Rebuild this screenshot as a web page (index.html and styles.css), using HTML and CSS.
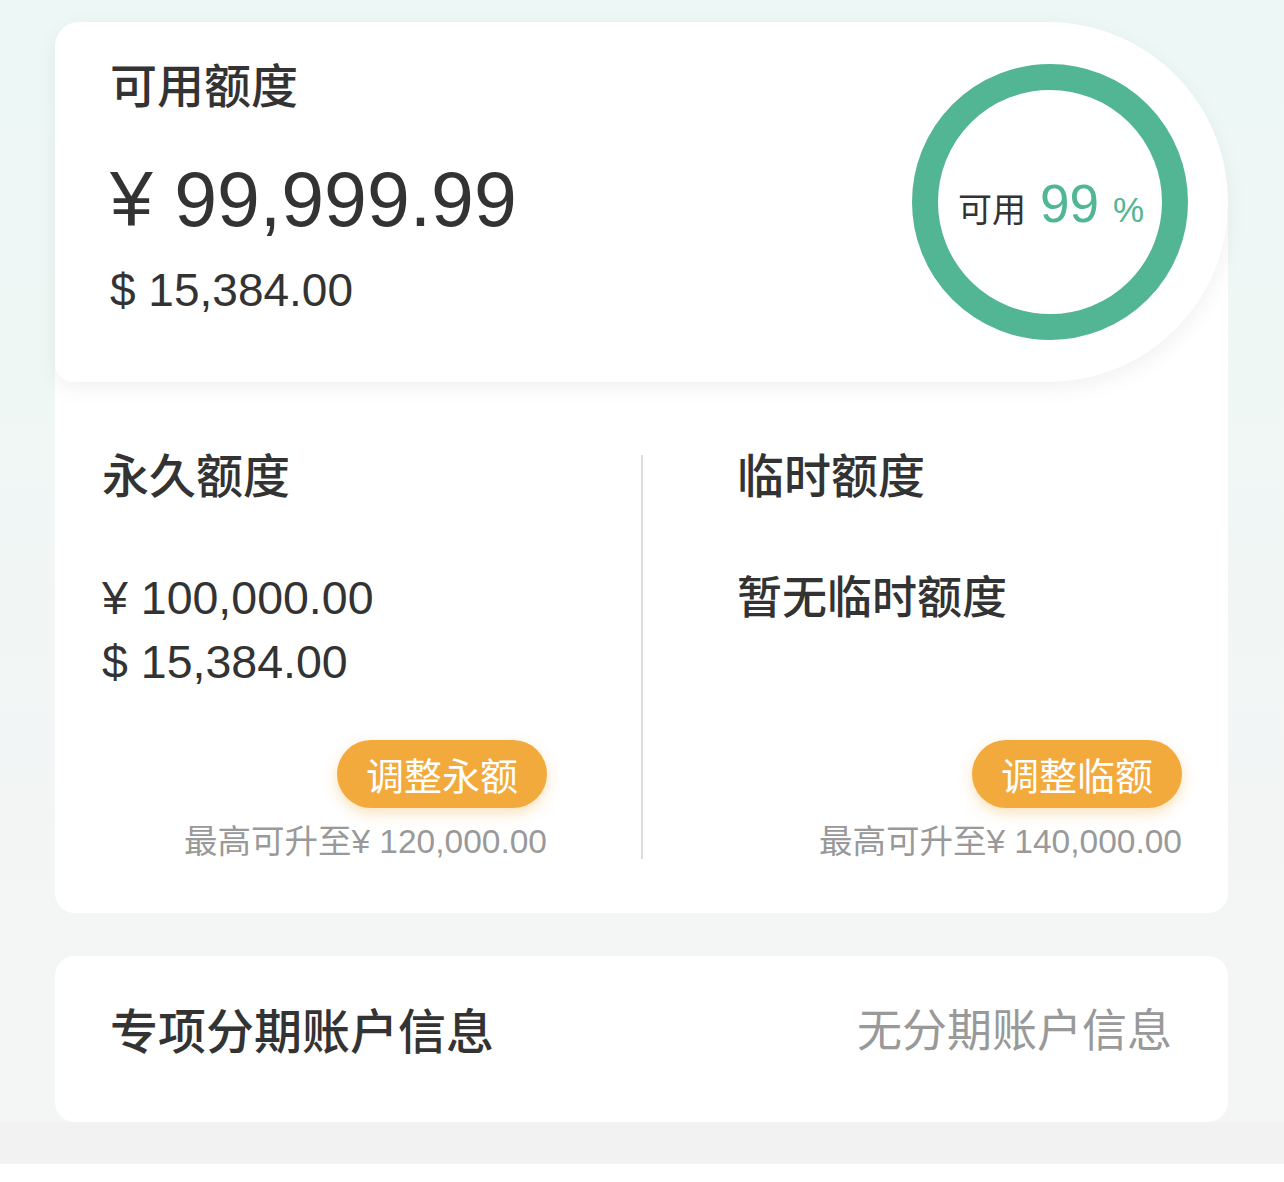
FILE: index.html
```html
<!DOCTYPE html>
<html lang="zh-CN">
<head>
<meta charset="utf-8">
<title>额度</title>
<link rel="stylesheet" href="styles.css">
</head>
<body>
<div class="page">
  <section class="top-card">
    <div class="avail">
      <div class="avail-title">可用额度</div>
      <div class="avail-cny">¥ 99,999.99</div>
      <div class="avail-usd">$ 15,384.00</div>
    </div>
    <div class="ring">
      <svg class="ring-svg" width="276" height="276" viewBox="0 0 276 276">
        <circle cx="138" cy="138" r="125" fill="none" stroke="#52b594" stroke-width="26"/>
      </svg>
      <div class="ring-text"><span class="ring-label">可用</span><span class="ring-num">99</span><span class="ring-pct">%</span></div>
    </div>
  </section>

  <section class="quota-card">
    <div class="quota-grid">
      <div class="quota-col">
        <div class="quota-title">永久额度</div>
        <div class="quota-amounts">
          <div class="amount">¥ 100,000.00</div>
          <div class="amount">$ 15,384.00</div>
        </div>
        <div class="quota-actions">
          <button class="btn">调整永额</button>
          <div class="note">最高可升至¥ 120,000.00</div>
        </div>
      </div>
      <div class="divider"></div>
      <div class="quota-col">
        <div class="quota-title">临时额度</div>
        <div class="quota-empty">暂无临时额度</div>
        <div class="quota-actions">
          <button class="btn">调整临额</button>
          <div class="note">最高可升至¥ 140,000.00</div>
        </div>
      </div>
    </div>
  </section>

  <section class="install-card">
    <div class="install-title">专项分期账户信息</div>
    <div class="install-value">无分期账户信息</div>
  </section>
</div>
<div class="band"></div>
</body>
</html>
```
FILE: styles.css
```css
html, body {
  margin: 0;
  padding: 0;
  background: #ffffff;
}

body {
  font-family: "Liberation Sans", "Noto Sans CJK SC", sans-serif;
  color: #333333;
}

.page {
  padding: 22px 56px 0 55px;
  background: linear-gradient(180deg, #edf8f6 0%, #f0f7f5 40%, #f4f5f5 80%, #f4f5f5 100%);
}

/* top card */
.top-card {
  position: relative;
  z-index: 2;
  height: 360px;
  box-sizing: border-box;
  display: flex;
  justify-content: space-between;
  align-items: center;
  padding: 0 40px 0 55px;
  background: #ffffff;
  border-radius: 24px 180px 180px 18px;
  box-shadow: 0 6px 22px rgba(0, 0, 0, 0.06);
}

.avail {
  align-self: flex-start;
  padding-top: 37px;
}

.avail-title {
  font-family: "Noto Sans CJK SC", sans-serif;
  font-size: 47px;
  line-height: 47px;
  font-weight: 500;
  color: #333333;
}

.avail-cny {
  margin-top: 55px;
  font-size: 77px;
  line-height: 77px;
  color: #333333;
}

.avail-usd {
  margin-top: 29px;
  font-size: 46px;
  line-height: 46px;
  color: #333333;
}

.ring {
  position: relative;
  width: 276px;
  height: 276px;
  display: flex;
  align-items: center;
  justify-content: center;
}

.ring-svg {
  position: absolute;
  left: 0;
  top: 0;
}

.ring-text {
  position: relative;
  white-space: nowrap;
  margin-top: 2px;
  margin-left: 2px;
}

.ring-label {
  font-family: "Noto Sans CJK SC", sans-serif;
  font-size: 34px;
  color: #333333;
}

.ring-num {
  margin-left: 14px;
  font-size: 53px;
  color: #52b594;
}

.ring-pct {
  margin-left: 14px;
  font-size: 35px;
  color: #52b594;
}

/* quota card */
.quota-card {
  position: relative;
  z-index: 1;
  margin-top: -180px;
  padding: 247px 46px 54px 47px;
  background: #ffffff;
  border-radius: 20px;
}

.quota-grid {
  display: grid;
  grid-template-columns: 1fr 2px 1fr;
  column-gap: 94px;
}

.divider {
  background: #dcdcdc;
  margin-top: 6px;
}

.quota-col {
  display: flex;
  flex-direction: column;
}

.quota-title {
  font-family: "Noto Sans CJK SC", sans-serif;
  font-size: 47px;
  line-height: 47px;
  font-weight: 500;
  color: #333333;
}

.quota-amounts {
  margin-top: 79px;
  display: flex;
  flex-direction: column;
  gap: 18px;
}

.amount {
  font-size: 46.5px;
  line-height: 46px;
  color: #333333;
}

.quota-empty {
  margin-top: 76px;
  font-family: "Noto Sans CJK SC", sans-serif;
  font-size: 45px;
  line-height: 45px;
  font-weight: 500;
  color: #333333;
}

.quota-actions {
  margin-top: auto;
  padding-top: 55px;
  display: flex;
  flex-direction: column;
  align-items: flex-end;
}

.btn {
  width: 210px;
  height: 68px;
  border: none;
  border-radius: 34px;
  background: #f2aa3c;
  color: #ffffff;
  font-family: "Noto Sans CJK SC", sans-serif;
  font-size: 38px;
  line-height: 68px;
  padding: 0;
  box-shadow: 0 5px 14px rgba(242, 170, 60, 0.35);
}

.note {
  margin-top: 16px;
  font-size: 33.5px;
  line-height: 35px;
  color: #999999;
  white-space: nowrap;
}

/* installment card */
.install-card {
  margin-top: 43px;
  display: flex;
  justify-content: space-between;
  align-items: center;
  padding: 48px 56px 70px 55px;
  background: #ffffff;
  border-radius: 20px;
  font-family: "Noto Sans CJK SC", sans-serif;
  line-height: 48px;
}

.install-title {
  font-size: 48px;
  font-weight: 500;
  color: #333333;
}

.install-value {
  font-size: 45px;
  color: #999999;
}

.band {
  height: 42px;
  background: #f2f2f2;
}
```
